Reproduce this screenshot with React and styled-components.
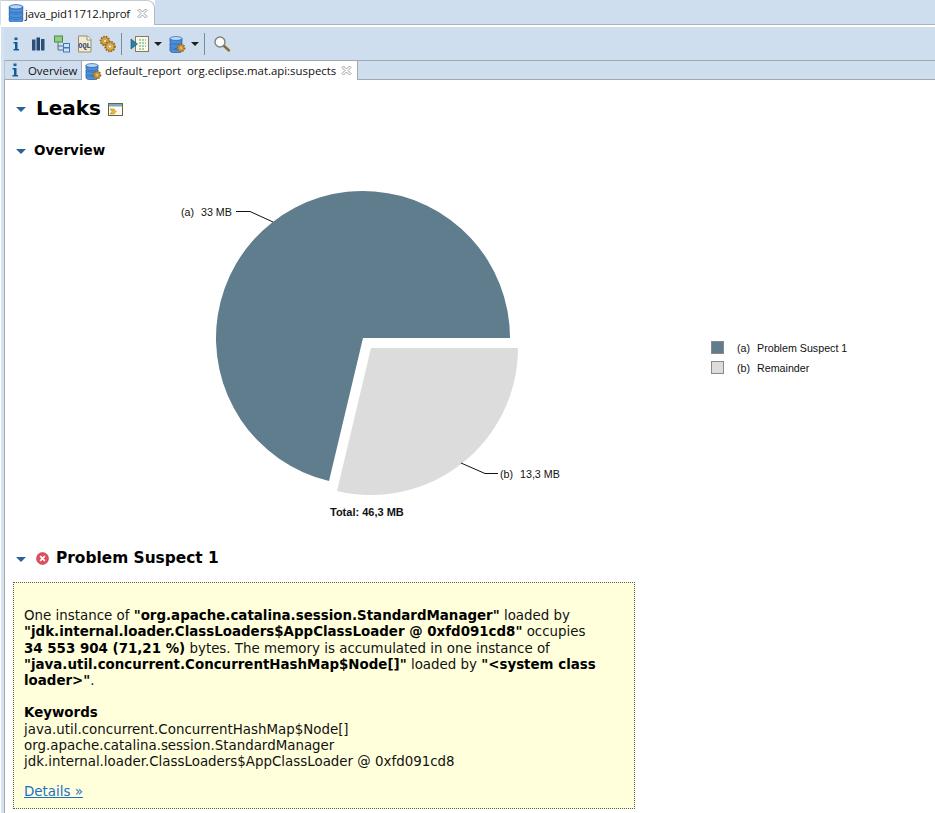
import styled, { createGlobalStyle } from "styled-components";

const GlobalStyle = createGlobalStyle`
  html, body {
    margin: 0;
    padding: 0;
    background: #fff;
  }
`;

const Page = styled.div`
  width: 935px;
  height: 813px;
  overflow: hidden;
  background: #fff;
  display: flex;
  flex-direction: column;
  font-family: "Open Sans", "Noto Sans", sans-serif;
  svg {
    flex: none;
    display: block;
  }
`;

const EditorTabs = styled.div`
  display: flex;
  height: 25px;
  flex: none;
`;

const EditorTab = styled.div`
  width: 155px;
  padding-left: 7px;
  box-sizing: border-box;
  display: flex;
  align-items: center;
  gap: 1px;
  border-top: 1px solid #c4ccd6;
  border-right: 1px solid #b4bcc8;
  border-left: 1px solid #d8dfe8;
  border-top-right-radius: 8px;
  font-size: 11.4px;
  letter-spacing: -0.15px;
  color: #111;
`;

const EditorFiller = styled.div`
  flex: 1;
  background: #cfdeef;
  border-bottom: 1px solid #acb3bd;
`;

const Frame = styled.div`
  flex: 1;
  display: flex;
  flex-direction: column;
  margin-top: 2px;
  margin-left: 1px;
  border-left: 3px solid #d7e2f0;
`;

const Toolbar = styled.div`
  height: 33px;
  flex: none;
  display: flex;
  align-items: center;
  background: #cfdeef;
`;

const ToolButton = styled.div`
  width: 23px;
  height: 24px;
  display: flex;
  align-items: center;
  justify-content: center;
`;

const DropArrow = styled.div`
  width: 14px;
  display: flex;
  justify-content: center;
  &::after {
    content: "";
    border-left: 4px solid transparent;
    border-right: 4px solid transparent;
    border-top: 4px solid #1f1f1f;
  }
`;

const ToolSeparator = styled.div`
  width: 1px;
  height: 22px;
  background: #7d8a97;
  margin: 0 ${(p) => p.$right}px 0 ${(p) => p.$left}px;
`;

const InnerTabs = styled.div`
  height: 20px;
  flex: none;
  display: flex;
  box-sizing: border-box;
  background: #cfdeef;
  border-top: 1px solid #a5a9ae;
  border-bottom: 1px solid #a5a9ae;
  border-left: 1px solid #b9c3cf;
`;

const InnerTab = styled.div`
  display: flex;
  align-items: center;
  box-sizing: border-box;
  font-size: 11.4px;
  color: #111;
  white-space: pre;
  height: ${(p) => (p.$active ? "19px" : "18px")};
  width: ${(p) => (p.$active ? "276px" : "77px")};
  background: ${(p) => (p.$active ? "#fff" : "#cfdeef")};
  border-right: 1px solid #a5a9ae;
  padding-left: 2px;
  gap: ${(p) => (p.$active ? "3px" : "5px")};
`;

const CloseSlot = styled.span`
  margin-left: ${(p) => p.$gap}px;
  display: flex;
`;

const Content = styled.div`
  flex: 1;
  border-left: 1px solid #a5a9ae;
  display: flex;
  flex-direction: column;
  min-height: 0;
`;

const HeadingRow = styled.div`
  display: flex;
  align-items: center;
  flex: none;
  height: ${(p) => p.$h}px;
  padding-left: 11px;
  font-family: "DejaVu Sans", Verdana, sans-serif;
  font-weight: 700;
  color: #000;
  font-size: ${(p) => p.$size}px;
  margin-top: ${(p) => p.$top || 0}px;
`;

const Twisty = styled.span`
  width: 0;
  height: 0;
  border-left: 5px solid transparent;
  border-right: 5px solid transparent;
  border-top: 5px solid #2a639c;
  margin-right: ${(p) => p.$gap}px;
  margin-top: 3px;
`;

const ReportSlot = styled.span`
  display: flex;
  margin: 3px 0 0 7px;
`;

const ErrorSlot = styled.span`
  display: flex;
  margin-right: 7px;
`;

const ChartBox = styled.div`
  height: 376px;
  flex: none;
  margin-top: 11px;
  text {
    font-family: "Liberation Sans", Arial, sans-serif;
    font-size: 10.7px;
    fill: #111;
  }
`;

const TotalLabel = styled.text`
  font-weight: 700;
  font-size: 11px !important;
`;

const SuspectBox = styled.div`
  margin: 12px 0 0 8px;
  width: 622px;
  height: 227px;
  box-sizing: border-box;
  flex: none;
  background: #ffffdc;
  border: 1px dotted #5c5c4c;
  padding: 25px 10px 0 10px;
  font-family: "DejaVu Sans", Verdana, sans-serif;
  font-size: 13.4px;
  line-height: 16.3px;
  color: #111;
  white-space: nowrap;
`;

const Para = styled.p`
  margin: 0 0 ${(p) => p.$after}px;
`;

const Strong = styled.b`
  color: #000;
`;

const DetailsLink = styled.a`
  color: #1a70c8;
  text-decoration: underline;
`;

const Gear = ({ cx, cy, r }) => (
  <g>
    <circle cx={cx} cy={cy} r={r} fill="#e0a63c" stroke="#8f6420" strokeWidth="1.6" strokeDasharray="1.5 1.2" />
    <circle cx={cx} cy={cy} r={r - 1.2} fill="#e9b94f" stroke="#8f6420" strokeWidth="0.6" />
    <circle cx={cx} cy={cy} r={r / 3} fill="#f7f2dc" stroke="#8f6420" strokeWidth="0.5" />
  </g>
);

const Db = ({ gear }) => (
  <svg width={gear ? 18 : 16} height="18" viewBox={gear ? "0 0 18 18" : "1 1 14 16"}>
    {[11, 6.5, 2].map((y) => (
      <g key={y}>
        <path d={`M2 ${y + 1.5}v3c0 1.4 2.7 2.5 6 2.5s6-1.1 6-2.5v-3z`} fill="#4a90de" stroke="#1c5aa6" strokeWidth="0.8" />
        <ellipse cx="8" cy={y + 1.5} rx="6" ry="1.9" fill="#bcd9f6" stroke="#1c5aa6" strokeWidth="0.7" />
      </g>
    ))}
    {gear && <Gear cx={13} cy={13} r={3.6} />}
  </svg>
);

const Info = () => (
  <svg width="16" height="16" viewBox="0 0 16 16">
    <rect x="6.5" y="1.5" width="3" height="2.6" fill="#1a5f9e" />
    <path d="M5.5 6h4v7h1.5v1.5H5.5V13H7V7.5H5.5z" fill="#155a9b" />
  </svg>
);

const Bars = () => (
  <svg width="16" height="16" viewBox="0 0 16 16">
    <rect x="1" y="3.5" width="3.5" height="11" fill="#2c4f7c" />
    <rect x="5.5" y="1.5" width="3.5" height="13" fill="#24466f" />
    <rect x="10" y="3" width="3.5" height="11.5" fill="#2c4f7c" />
  </svg>
);

const Tree = () => (
  <svg width="18" height="18" viewBox="0 0 18 18">
    <path d="M5 7v8h6M5 11h6" fill="none" stroke="#5d6a78" strokeWidth="1" />
    <rect x="1.5" y="1" width="8" height="6" fill="#8fd07f" stroke="#4d8a44" />
    <rect x="10.5" y="8.5" width="6" height="4" fill="#cfe3f8" stroke="#3b78bd" />
    <rect x="10.5" y="13" width="6" height="4" fill="#cfe3f8" stroke="#3b78bd" />
  </svg>
);

const Oql = () => (
  <svg width="16" height="18" viewBox="0 0 16 18">
    <path d="M1.5 1h9l3.5 3.5V17H1.5z" fill="#f3ead0" stroke="#9a8c6c" />
    <path d="M10 1v4h4" fill="#fff" stroke="#9a8c6c" />
    <text x="7.5" y="12.5" textAnchor="middle" fontFamily="Liberation Mono, monospace" fontSize="7" fontWeight="700" fill="#27406b">OQL</text>
  </svg>
);

const Gears = () => (
  <svg width="18" height="18" viewBox="0 0 18 18">
    <Gear cx={6} cy={6} r={4.5} />
    <Gear cx={11} cy={11.5} r={5} />
  </svg>
);

const RunIcon = () => (
  <svg width="20" height="18" viewBox="0 0 20 18">
    <rect x="5.5" y="1.5" width="13" height="15" fill="#f7f8f0" stroke="#8a7a4c" />
    <path d="M9 5h7M9 8h7M9 11h7M9 14h5" stroke="#58a05c" strokeWidth="1.1" strokeDasharray="2 1" />
    <path d="M1 4l6.5 5L1 14z" fill="#2a7fa8" stroke="#12506e" strokeWidth="0.6" />
  </svg>
);

const Search = () => (
  <svg width="18" height="18" viewBox="0 0 18 18">
    <path d="M10.5 10.5L16 15.5" stroke="#8c6a30" strokeWidth="2.4" strokeLinecap="round" />
    <circle cx="7" cy="7" r="5" fill="#fdfdf6" stroke="#7d8284" strokeWidth="1.4" />
  </svg>
);

const CloseX = () => (
  <svg width="11" height="11" viewBox="0 0 11 11">
    <path
      d="M1 2.5L2.5 1l3 3 3-3L10 2.5l-3 3 3 3L8.5 10l-3-3-3 3L1 8.5l3-3z"
      fill="#fff"
      stroke="#8f9499"
      strokeWidth="0.9"
    />
  </svg>
);

const ErrorIcon = () => (
  <svg width="13" height="13" viewBox="0 0 13 13">
    <circle cx="6.5" cy="6.5" r="6" fill="#e0505f" stroke="#c03848" strokeWidth="0.6" />
    <path d="M4.2 4.2l4.6 4.6M8.8 4.2l-4.6 4.6" stroke="#fff" strokeWidth="1.7" />
  </svg>
);

const ReportIcon = () => (
  <svg width="15" height="13" viewBox="0 0 15 13">
    <rect x="0.5" y="0.5" width="14" height="12" fill="#fdfbf0" stroke="#6b6040" />
    <rect x="1" y="1" width="13" height="2.5" fill="#7fa6c8" />
    <path d="M2 6h4l2 2.5L6 11H2l2-2.5z" fill="#f0b93c" stroke="#a87a1c" strokeWidth="0.5" />
  </svg>
);

const PieChart = () => (
  <svg width="930" height="376" viewBox="5 170 930 376">
    <path d="M363 338 L510 338 A147 147 0 1 0 329 481 Z" fill="#5f7d8d" />
    <path d="M371 348 L518 348 A147 147 0 0 1 337 491 Z" fill="#dcdcdc" />
    <polyline points="236,211.5 250,211.5 273,222" fill="none" stroke="#111" />
    <polyline points="461,463 485,473.5 498,473.5" fill="none" stroke="#111" />
    <text x="181" y="216">(a)</text>
    <text x="201" y="216">33 MB</text>
    <text x="500" y="478">(b)</text>
    <text x="520" y="478">13,3 MB</text>
    <TotalLabel x="330" y="516">Total: 46,3 MB</TotalLabel>
    <rect x="711.5" y="341.5" width="12" height="12" fill="#5f7d8d" stroke="#8a8a8a" />
    <rect x="711.5" y="361.5" width="12" height="12" fill="#dcdcdc" stroke="#8a8a8a" />
    <text x="737" y="352">(a)</text>
    <text x="757" y="352">Problem Suspect 1</text>
    <text x="737" y="372">(b)</text>
    <text x="757" y="372">Remainder</text>
  </svg>
);

export default function App() {
  return (
    <Page>
      <GlobalStyle />
      <EditorTabs>
        <EditorTab>
          <Db />
          <span>java_pid11712.hprof</span>
          <CloseSlot $gap={6}><CloseX /></CloseSlot>
        </EditorTab>
        <EditorFiller />
      </EditorTabs>
      <Frame>
        <Toolbar>
          <ToolButton><Info /></ToolButton>
          <ToolButton><Bars /></ToolButton>
          <ToolButton><Tree /></ToolButton>
          <ToolButton><Oql /></ToolButton>
          <ToolButton><Gears /></ToolButton>
          <ToolSeparator $left={2} $right={6} />
          <ToolButton><RunIcon /></ToolButton>
          <DropArrow />
          <ToolButton><Db gear /></ToolButton>
          <DropArrow />
          <ToolSeparator $left={2} $right={5} />
          <ToolButton><Search /></ToolButton>
        </Toolbar>
        <InnerTabs>
          <InnerTab>
            <Info />
            <span>Overview</span>
          </InnerTab>
          <InnerTab $active>
            <Db gear />
            <span>default_report  org.eclipse.mat.api:suspects</span>
            <CloseSlot $gap={2}><CloseX /></CloseSlot>
          </InnerTab>
        </InnerTabs>
        <Content>
          <HeadingRow $h={28} $size={20} $top={14}>
            <Twisty $gap={10} />
            <span>Leaks</span>
            <ReportSlot><ReportIcon /></ReportSlot>
          </HeadingRow>
          <HeadingRow $h={18} $size={13.5} $top={19}>
            <Twisty $gap={8} />
            <span>Overview</span>
          </HeadingRow>
          <ChartBox>
            <PieChart />
          </ChartBox>
          <HeadingRow $h={24} $size={15.4}>
            <Twisty $gap={10} />
            <ErrorSlot><ErrorIcon /></ErrorSlot>
            <span>Problem Suspect 1</span>
          </HeadingRow>
          <SuspectBox>
            <Para $after={16}>
              One instance of <Strong>"org.apache.catalina.session.StandardManager"</Strong> loaded by
              <br />
              <Strong>"jdk.internal.loader.ClassLoaders$AppClassLoader @ 0xfd091cd8"</Strong> occupies
              <br />
              <Strong>34 553 904 (71,21 %)</Strong> bytes. The memory is accumulated in one instance of
              <br />
              <Strong>"java.util.concurrent.ConcurrentHashMap$Node[]"</Strong> loaded by <Strong>"&lt;system class</Strong>
              <br />
              <Strong>loader&gt;"</Strong>.
            </Para>
            <Para $after={13}>
              <Strong>Keywords</Strong>
              <br />
              java.util.concurrent.ConcurrentHashMap$Node[]
              <br />
              org.apache.catalina.session.StandardManager
              <br />
              jdk.internal.loader.ClassLoaders$AppClassLoader @ 0xfd091cd8
            </Para>
            <DetailsLink href="#">Details »</DetailsLink>
          </SuspectBox>
        </Content>
      </Frame>
    </Page>
  );
}
